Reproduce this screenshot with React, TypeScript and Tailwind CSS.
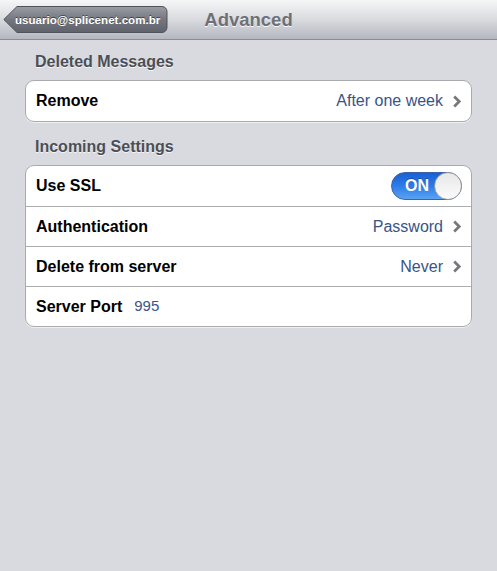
import type { ReactNode } from 'react';

const font = { fontFamily: '"Liberation Sans", Arial, sans-serif' };

function Chevron() {
  return (
    <svg width="10" height="13" viewBox="0 0 10 13" className="shrink-0">
      <path d="M2.2 1.6 L7.2 6.5 L2.2 11.4" fill="none" stroke="#77787c" strokeWidth="2.8" />
    </svg>
  );
}

function BackButton({ label }: { label: string }) {
  return (
    <button className="relative h-[28px] w-[165px] flex items-center pl-[12px]">
      <svg width="165" height="28" viewBox="0 0 165 28" className="absolute inset-0">
        <defs>
          <linearGradient id="back" x1="0" y1="0" x2="0" y2="1">
            <stop offset="0" stopColor="#9a9da4" />
            <stop offset="0.5" stopColor="#74777f" />
            <stop offset="1" stopColor="#5f626a" />
          </linearGradient>
        </defs>
        <path
          d="M14 0.5 H159 a5 5 0 0 1 5 5 V21.5 a5 5 0 0 1 -5 5 H14 L0.8 13.5 Z"
          fill="url(#back)"
          stroke="#50535a"
        />
      </svg>
      <span className="relative text-white font-bold text-[11.6px] [text-shadow:0_-1px_0_rgba(0,0,0,0.5)]">
        {label}
      </span>
    </button>
  );
}

function Toggle() {
  return (
    <div className="relative w-[71px] h-[28px] rounded-full border border-[#3a63a8] bg-gradient-to-b from-[#1a5fd6] via-[#2c7ce8] to-[#5aa2f3] flex items-center">
      <span className="pl-[13px] text-white font-bold text-[16px] [text-shadow:0_-1px_0_rgba(0,0,0,0.3)]">ON</span>
      <div className="absolute right-[-1px] top-[-1px] w-[28px] h-[28px] rounded-full border border-[#9a9a9a] bg-gradient-to-b from-[#e8e8e8] to-[#fbfbfb]" />
    </div>
  );
}

function Row({ label, value, chevron, right, inline }: {
  label: string;
  value?: string;
  chevron?: boolean;
  right?: ReactNode;
  inline?: string;
}) {
  return (
    <div className="h-[40px] flex items-center pl-[10px] pr-[9px] border-t border-[#acaeb2] first:border-t-0">
      <span className="font-bold text-[16px] text-black">{label}</span>
      {inline && <span className="ml-[12px] text-[15px] text-[#385487]">{inline}</span>}
      <div className="flex-1" />
      {value && <span className="text-[16px] text-[#385487] mr-[9px]">{value}</span>}
      {chevron && <Chevron />}
      {right}
    </div>
  );
}

function Group({ title, children }: { title: string; children: ReactNode }) {
  return (
    <section>
      <h3 className="h-[20px] leading-[20px] pl-[10px] mb-[8px] font-bold text-[16px] text-[#4c4e55] [text-shadow:0_1px_0_#f4f5f7]">
        {title}
      </h3>
      <div className="rounded-[9px] border border-[#a8aaae] bg-white overflow-hidden shadow-[0_1px_0_#eef0f2]">
        {children}
      </div>
    </section>
  );
}

export default function App() {
  return (
    <div style={font} className="w-[497px] h-[571px] bg-[#d8dadf] flex flex-col">
      <header className="h-[40px] grid grid-cols-[1fr_auto_1fr] items-center border-b border-[#8a8d94] bg-gradient-to-b from-[#f5f6f7] via-[#d9dbdf] to-[#b4b7bf]">
        <div className="pl-[3px] flex items-center">
          <BackButton label="usuario@splicenet.com.br" />
        </div>
        <h1 className="text-[18.5px] font-bold text-[#6e7077] [text-shadow:0_1px_0_#f8f8f8]">Advanced</h1>
        <div />
      </header>

      <main className="px-[25px] pt-[12px] flex flex-col gap-[15px]">
        <Group title="Deleted Messages">
          <Row label="Remove" value="After one week" chevron />
        </Group>
        <Group title="Incoming Settings">
          <Row label="Use SSL" right={<Toggle />} />
          <Row label="Authentication" value="Password" chevron />
          <Row label="Delete from server" value="Never" chevron />
          <Row label="Server Port" inline="995" />
        </Group>
      </main>
    </div>
  );
}
